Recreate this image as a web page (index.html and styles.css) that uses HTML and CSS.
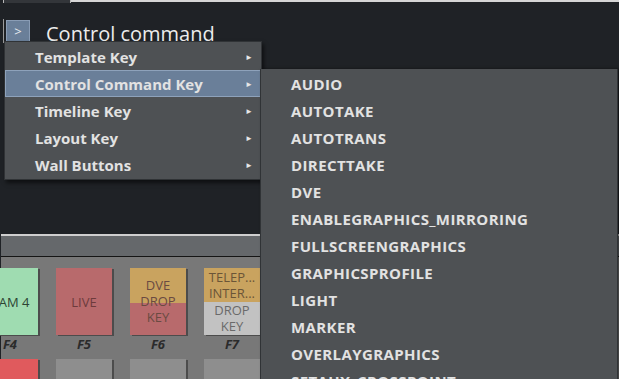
FILE: index.html
```html
<!DOCTYPE html>
<html lang="en">
<head>
    <meta charset="UTF-8">
    <title>Control command</title>
    <link rel="stylesheet" href="styles.css">
</head>
<body>
    <div class="editor">
        <div class="top-edge">
            <div class="top-tab"></div>
            <div class="top-line"></div>
        </div>

        <div class="header">
            <button class="expand-button">&gt;</button>
            <span class="header-title">Control command</span>
        </div>

        <div class="spacer"></div>

        <div class="keys-panel">
            <div class="keys-toolbar"></div>
            <div class="keys-grid">
                <div class="key-cell">
                    <div class="key key-green">CAM 4</div>
                    <div class="key-label">F4</div>
                </div>
                <div class="key-cell">
                    <div class="key key-red">LIVE</div>
                    <div class="key-label">F5</div>
                </div>
                <div class="key-cell">
                    <div class="key key-dve">DVE<br>DROP<br>KEY</div>
                    <div class="key-label">F6</div>
                </div>
                <div class="key-cell">
                    <div class="key key-split">
                        <div class="key-half key-orange">TELEP...<br>INTER...</div>
                        <div class="key-half key-light">DROP<br>KEY</div>
                    </div>
                    <div class="key-label">F7</div>
                </div>

                <div class="key-cell"><div class="key key-bright-red"></div></div>
                <div class="key-cell"><div class="key key-grey"></div></div>
                <div class="key-cell"><div class="key key-grey"></div></div>
                <div class="key-cell"><div class="key key-grey"></div></div>
            </div>
        </div>
    </div>

    <div class="context-menu">
        <div class="menu-item"><span>Template Key</span><span class="arrow">&#9658;</span></div>
        <div class="menu-item active"><span>Control Command Key</span><span class="arrow">&#9658;</span></div>
        <div class="menu-item"><span>Timeline Key</span><span class="arrow">&#9658;</span></div>
        <div class="menu-item"><span>Layout Key</span><span class="arrow">&#9658;</span></div>
        <div class="menu-item"><span>Wall Buttons</span><span class="arrow">&#9658;</span></div>
    </div>

    <div class="submenu">
        <div class="submenu-item">AUDIO</div>
        <div class="submenu-item">AUTOTAKE</div>
        <div class="submenu-item">AUTOTRANS</div>
        <div class="submenu-item">DIRECTTAKE</div>
        <div class="submenu-item">DVE</div>
        <div class="submenu-item">ENABLEGRAPHICS_MIRRORING</div>
        <div class="submenu-item">FULLSCREENGRAPHICS</div>
        <div class="submenu-item">GRAPHICSPROFILE</div>
        <div class="submenu-item">LIGHT</div>
        <div class="submenu-item">MARKER</div>
        <div class="submenu-item">OVERLAYGRAPHICS</div>
        <div class="submenu-item">SETAUX_CROSSPOINT</div>
    </div>
</body>
</html>
```

FILE: styles.css
```css
body {
    margin: 0;
    width: 619px;
    height: 379px;
    overflow: hidden;
    background-color: #1f2226;
    font-family: "Open Sans", "Noto Sans", sans-serif;
    position: relative;
}

.editor {
    display: flex;
    flex-direction: column;
    height: 379px;
    border-left: 1px solid #1f2226;
}

.top-edge {
    display: flex;
    height: 3px;
}

.top-tab {
    width: 66px;
    height: 3px;
    background-color: #33363a;
    border-left: 1px solid #b8b8b8;
    margin-left: 2px;
    border-right: 1px solid #b8b8b8;
}

.top-line {
    flex: 1;
    height: 2px;
    background-color: #d6d6d6;
}

.header {
    display: flex;
    align-items: center;
    height: 24px;
    margin-top: 16px;
    padding-left: 4px;
    border-left: 1px solid #9a9a9a;
    margin-left: 2px;
}

.expand-button {
    width: 24px;
    height: 23px;
    padding: 0;
    margin-left: -2px;
    background-color: #6a7f99;
    border: 1px solid #8a9db6;
    color: #e6ebf1;
    font-family: "Open Sans", sans-serif;
    font-size: 13px;
    line-height: 20px;
}

.header-title {
    margin-left: 16px;
    color: #ececec;
    font-size: 20px;
    line-height: 24px;
    position: relative;
    top: 3px;
}

.spacer {
    flex: 1;
}

.keys-panel {
    height: 143px;
    border-top: 2px solid #cfcfcf;
    background-color: #787878;
}

.keys-toolbar {
    height: 20px;
    background-color: #65686b;
    border-bottom: 1px solid #151515;
}

.keys-grid {
    display: grid;
    grid-template-columns: repeat(4, 56px);
    column-gap: 18px;
    row-gap: 0;
    margin-left: -19px;
    padding-top: 11px;
}

.key-cell {
    display: flex;
    flex-direction: column;
    align-items: center;
}

.key {
    width: 56px;
    height: 67px;
    box-shadow: 2px 1px 0 #4c4c4c;
    display: flex;
    align-items: center;
    justify-content: center;
    text-align: center;
    font-size: 13px;
    line-height: 16px;
    color: #3f3f3f;
}

.key-green {
    background-color: #9fdcb1;
    color: #2c4433;
}

.key-red {
    background-color: #b86a6c;
    color: #6d3b3c;
}

.key-dve {
    background: linear-gradient(#c9a35f 52%, #b86a6c 52%);
    color: #6a4a42;
    align-items: flex-start;
    padding-top: 9px;
    box-sizing: border-box;
}

.key-bright-red {
    background-color: #e05a5d;
}

.key-grey {
    background-color: #8e8e8e;
}

.key-split {
    flex-direction: column;
}

.key-half {
    width: 100%;
    flex: 1;
    display: flex;
    align-items: center;
    justify-content: center;
}

.key-orange {
    background-color: #c9a35f;
    color: #6b5537;
}

.key-light {
    background-color: #c2c2c2;
    color: #6a6a6a;
}

.key-label {
    height: 24px;
    font-size: 13px;
    font-weight: bold;
    font-style: italic;
    color: #2b2b2b;
    line-height: 18px;
}

.context-menu {
    position: absolute;
    left: 4px;
    top: 41px;
    width: 256px;
    padding: 1px 0;
    background-color: #4e5154;
    border: 1px solid #303336;
    box-shadow: 2px 3px 4px rgba(0, 0, 0, 0.55);
}

.menu-item {
    display: flex;
    justify-content: space-between;
    align-items: center;
    height: 27px;
    padding-left: 29px;
    padding-right: 7px;
    color: #e2e2e2;
    font-size: 15px;
    font-weight: bold;
    border: 1px solid transparent;
    box-sizing: border-box;
}

.menu-item.active {
    background-color: #6a7f99;
    border-color: #8ea2bb;
}

.arrow {
    font-size: 8px;
    color: #e6e6e6;
}

.submenu {
    position: absolute;
    left: 260px;
    top: 69px;
    width: 356px;
    height: 330px;
    padding-top: 2px;
    background-color: #4e5154;
    border-left: 1px solid #303336;
    border-right: 1px solid #303336;
    box-shadow: 2px 0 3px rgba(0, 0, 0, 0.5);
}

.submenu-item {
    height: 27px;
    line-height: 27px;
    padding-left: 30px;
    color: #e2e2e2;
    font-size: 15px;
    font-weight: bold;
    letter-spacing: 0.4px;
}
```
